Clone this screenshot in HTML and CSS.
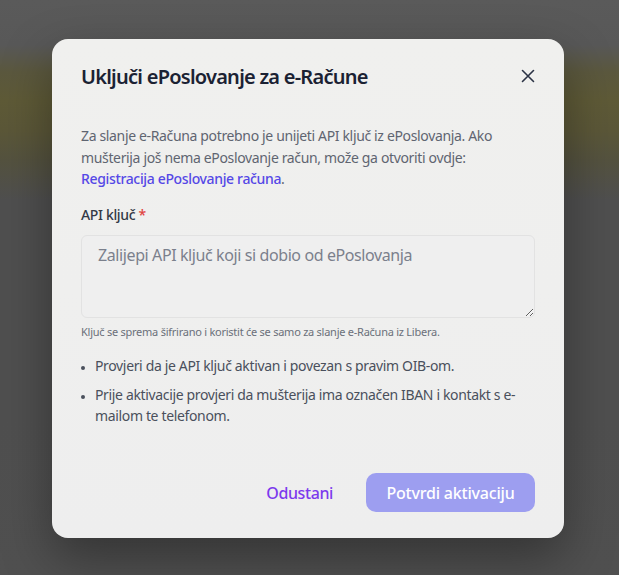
FILE: index.html
```html
<!DOCTYPE html>
<html lang="hr">
<head>
<meta charset="utf-8">
<title>Uključi ePoslovanje</title>
<link rel="stylesheet" href="styles.css">
</head>
<body>
<div class="backdrop">
  <div class="modal" role="dialog">
    <div class="modal-header">
      <h2 class="modal-title">Uključi ePoslovanje za e-Račune</h2>
      <button class="close-btn" aria-label="Zatvori">
        <svg width="14" height="14" viewBox="0 0 14 14"><path d="M1.5 1.5 L12.5 12.5 M12.5 1.5 L1.5 12.5" stroke="#2b3345" stroke-width="1.6" stroke-linecap="round" fill="none"/></svg>
      </button>
    </div>
    <p class="intro">Za slanje e-Računa potrebno je unijeti API ključ iz ePoslovanja. Ako mušterija još nema ePoslovanje račun, može ga otvoriti ovdje: <a class="link" href="#">Registracija ePoslovanje računa</a>.</p>
    <label class="field-label" for="api">API ključ <span class="req">*</span></label>
    <textarea id="api" class="field-input" placeholder="Zalijepi API ključ koji si dobio od ePoslovanja"></textarea>
    <p class="helper">Ključ se sprema šifrirano i koristit će se samo za slanje e-Računa iz Libera.</p>
    <ul class="notes">
      <li>Provjeri da je API ključ aktivan i povezan s pravim OIB-om.</li>
      <li>Prije aktivacije provjeri da mušterija ima označen IBAN i kontakt s e-mailom te telefonom.</li>
    </ul>
    <div class="modal-footer">
      <button class="btn-cancel">Odustani</button>
      <button class="btn-confirm">Potvrdi aktivaciju</button>
    </div>
  </div>
</div>
</body>
</html>
```

FILE: styles.css
```css
* { box-sizing: border-box; }
html, body { margin: 0; padding: 0; }
body {
  font-family: "Noto Sans", "Open Sans", sans-serif;
  width: 619px;
  height: 575px;
  overflow: hidden;
}
.backdrop {
  width: 619px;
  height: 575px;
  background: linear-gradient(180deg, #5a5a5a 0px, #585858 45px, #5b583e 72px, #5e5a37 100px, #5b5738 130px, #54523f 160px, #4f4f4f 200px, #4f4f4f 420px, #505050 575px);
  padding: 39px 55px 0 52px;
}
.modal {
  width: 512px;
  height: 499px;
  background: linear-gradient(180deg, #f0f0ee 0%, #eeeeee 100%);
  border-radius: 16px;
  box-shadow: 0 20px 50px rgba(0,0,0,0.35);
  padding: 24px 29px 26px 29px;
  display: flex;
  flex-direction: column;
  letter-spacing: -0.35px;
}
.modal-header {
  display: flex;
  align-items: center;
  justify-content: space-between;
  height: 28px;
}
.modal-title {
  margin: 0;
  font-size: 20px;
  line-height: 28px;
  font-weight: 600;
  color: #1b2233;
  letter-spacing: -0.75px;
}
.close-btn {
  background: none;
  border: 0;
  padding: 0;
  width: 14px;
  height: 14px;
  margin-top: -2px;
  display: flex;
  cursor: pointer;
}
.intro {
  margin: 34px 0 0 0;
  font-size: 14px;
  line-height: 21.5px;
  color: #5f6571;
}
.link {
  color: #5548e6;
  text-decoration: none;
  font-weight: 500;
}
.field-label {
  display: block;
  margin-top: 15px;
  font-size: 14px;
  line-height: 20px;
  color: #333a47;
  font-weight: 500;
}
.req { color: #e0433f; }
.field-input {
  display: block;
  margin-top: 10px;
  width: 454px;
  height: 83px;
  border: 1px solid #e2e2e2;
  border-radius: 6px;
  background: #efefef;
  padding: 7px 16px;
  font-family: inherit;
  font-size: 16px;
  line-height: 24px;
  letter-spacing: -0.4px;
  color: #333;
  resize: vertical;
}
.field-input::placeholder { color: #7b808c; }
.helper {
  margin: 6px 0 0 0;
  font-size: 11px;
  line-height: 16px;
  letter-spacing: -0.25px;
  color: #6b707a;
}
.notes {
  margin: 15px 0 0 0;
  padding: 0 0 0 14px;
  font-size: 14px;
  line-height: 21px;
  color: #4a505c;
}
.notes li { margin-bottom: 8px; }
.notes li::marker { font-size: 10px; }
.modal-footer {
  margin-top: auto;
  display: flex;
  justify-content: flex-end;
  align-items: center;
  gap: 16px;
}
.btn-cancel {
  background: none;
  border: 0;
  font-family: inherit;
  font-size: 16px;
  font-weight: 500;
  letter-spacing: -0.4px;
  color: #7c3aed;
  padding: 0 17px;
  height: 39px;
  cursor: pointer;
}
.btn-confirm {
  background: #9d9ef0;
  border: 0;
  border-radius: 10px;
  height: 39px;
  width: 169px;
  font-family: inherit;
  font-size: 16px;
  font-weight: 500;
  letter-spacing: -0.2px;
  color: #ffffff;
  cursor: pointer;
}
```
